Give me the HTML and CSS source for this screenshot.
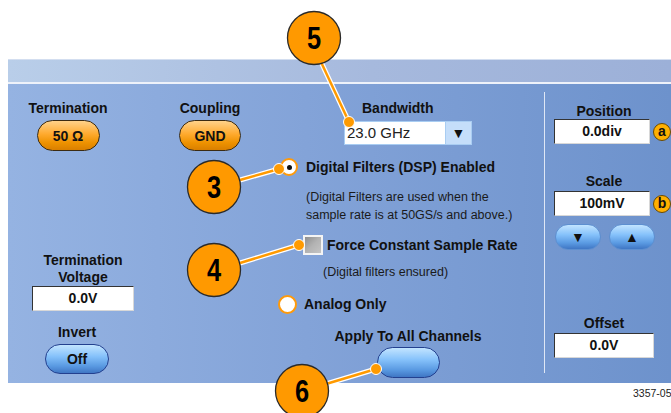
FILE: index.html
```html
<!DOCTYPE html>
<html lang="en">
<head>
    <meta charset="UTF-8">
    <meta name="viewport" content="width=device-width, initial-scale=1.0">
    <title>Channel Setup</title>
    <link rel="stylesheet" href="styles.css">
</head>
<body>
    <div class="page">
        <div class="panel">
            <div class="panel-head"></div>
            <div class="panel-body">

                <!-- left column: termination, voltage, invert -->
                <div class="col col-left">
                    <div class="group g-term">
                        <div class="label">Termination</div>
                        <div class="pill pill-orange">50 Ω</div>
                    </div>
                    <div class="group g-tv">
                        <div class="label label-2">Termination<br>Voltage</div>
                        <div class="field">0.0V</div>
                    </div>
                    <div class="group g-invert">
                        <div class="label">Invert</div>
                        <div class="pill pill-blue">Off</div>
                    </div>
                </div>

                <!-- middle column: coupling, bandwidth, filters -->
                <div class="col col-mid">
                    <div class="top-row">
                        <div class="group g-coupling">
                            <div class="label">Coupling</div>
                            <div class="pill pill-orange">GND</div>
                        </div>
                        <div class="g-bw">
                            <div class="label bw-label">Bandwidth</div>
                            <div class="dropdown">
                                <span class="dd-value">23.0 GHz</span>
                                <span class="dd-arrow">▼</span>
                            </div>
                        </div>
                    </div>

                    <div class="options">
                        <div class="option opt-dsp">
                            <span class="radio checked"></span>
                            <span class="opt-text">Digital Filters (DSP) Enabled</span>
                        </div>
                        <p class="note note-dsp">(Digital Filters are used when the<br>sample rate is at 50GS/s and above.)</p>
                        <div class="option opt-force">
                            <span class="checkbox"></span>
                            <span class="opt-text">Force Constant Sample Rate</span>
                        </div>
                        <p class="note note-force">(Digital filters ensured)</p>
                        <div class="option opt-analog">
                            <span class="radio"></span>
                            <span class="opt-text">Analog Only</span>
                        </div>
                    </div>

                    <div class="group g-apply">
                        <div class="label">Apply To All Channels</div>
                        <div class="pill pill-blue apply-btn"></div>
                    </div>
                </div>

                <!-- right column: position, scale, offset -->
                <div class="col col-right">
                    <div class="label">Position</div>
                    <div class="field-row">
                        <div class="field">0.0div</div>
                        <span class="badge">a</span>
                    </div>
                    <div class="label scale-label">Scale</div>
                    <div class="field-row">
                        <div class="field">100mV</div>
                        <span class="badge">b</span>
                    </div>
                    <div class="arrows">
                        <div class="pill pill-blue arrow-btn">▼</div>
                        <div class="pill pill-blue arrow-btn">▲</div>
                    </div>
                    <div class="label offset-label">Offset</div>
                    <div class="field-row">
                        <div class="field">0.0V</div>
                    </div>
                </div>
            </div>
        </div>
        <div class="fig-id">3357-05</div>

        <!-- numbered callouts drawn over the panel -->
        <svg class="callouts" width="671" height="413" viewBox="0 0 671 413">
            <g class="leader">
                <line x1="321" y1="62" x2="349" y2="122"/>
                <line x1="240" y1="180" x2="279" y2="169"/>
                <line x1="240" y1="263" x2="299" y2="245"/>
                <line x1="326" y1="384" x2="376" y2="369"/>
            </g>
            <g class="leader-in">
                <line x1="321" y1="62" x2="349" y2="122"/>
                <line x1="240" y1="180" x2="279" y2="169"/>
                <line x1="240" y1="263" x2="299" y2="245"/>
                <line x1="326" y1="384" x2="376" y2="369"/>
            </g>
            <g class="dot">
                <circle cx="349" cy="122" r="5.5"/>
                <circle cx="279" cy="169" r="5.5"/>
                <circle cx="299" cy="245" r="5.5"/>
                <circle cx="376" cy="369" r="5.5"/>
            </g>
            <g class="bubble">
                <circle cx="314" cy="38" r="26.5"/>
                <circle cx="214" cy="187" r="26.5"/>
                <circle cx="214" cy="270" r="26.5"/>
                <circle cx="302" cy="391" r="26.5"/>
            </g>
            <g class="num">
                <text transform="translate(314 49) scale(0.82 1)">5</text>
                <text transform="translate(214 198) scale(0.82 1)">3</text>
                <text transform="translate(214 281) scale(0.82 1)">4</text>
                <text transform="translate(302 402) scale(0.82 1)">6</text>
            </g>
        </svg>
    </div>
</body>
</html>
```

FILE: styles.css
```css
body {
    margin: 0;
    font-family: "Liberation Sans", Arial, sans-serif;
    background: #fff;
}
.page {
    position: relative;
    width: 671px;
    height: 413px;
    overflow: hidden;
}
.panel {
    margin: 59px 0 0 8px;
}
.panel-head {
    height: 22px;
    background: linear-gradient(to right, #b9cee9, #a6b9dd 55%, #9cb0d8);
    border-top: 1px solid #d3def0;
    border-bottom: 2px solid #eef2fa;
}
.panel-body {
    display: flex;
    height: 299px;
    background: linear-gradient(to right, #95b3e2, #83a3d8 45%, #6d92cc);
}
.label {
    font-size: 14px;
    font-weight: bold;
    line-height: 16px;
    color: #111;
    text-align: center;
    white-space: nowrap;
}
.group {
    display: flex;
    flex-direction: column;
    align-items: center;
}

/* buttons */
.pill {
    box-sizing: border-box;
    border-radius: 16px;
    font-size: 14px;
    font-weight: bold;
    color: #111;
    display: flex;
    align-items: center;
    justify-content: center;
}
.pill-orange {
    width: 63px;
    height: 31px;
    margin-top: 4px;
    background: linear-gradient(#ffd28a, #ffaa2e 45%, #ee9200 75%, #d97f00);
    border: 1.5px solid #3b2b12;
}
.pill-blue {
    height: 30px;
    background: linear-gradient(#c2e4ff, #86c2fb 40%, #5a9ae2 75%, #3f76c4);
    border: 1.5px solid #23408f;
}

/* left column */
.col-left {
    width: 150px;
    padding-top: 16px;
}
.g-term {
    margin-left: 20px;
    width: 80px;
}
.g-tv {
    margin-left: 24px;
    width: 102px;
    margin-top: 101px;
}
.label-2 {
    line-height: 17px;
}
.g-invert {
    margin-left: 29px;
    width: 80px;
    margin-top: 13px;
}
.g-invert .pill {
    width: 64px;
    margin-top: 4px;
}

/* value fields */
.field {
    box-sizing: border-box;
    width: 102px;
    height: 25px;
    background: #fff;
    border-top: 1.5px solid #333;
    border-left: 1.5px solid #333;
    border-right: 1px solid #d8d8d8;
    border-bottom: 1px solid #d8d8d8;
    font-size: 14px;
    font-weight: bold;
    line-height: 22px;
    text-align: center;
    color: #111;
}

/* middle column */
.col-mid {
    width: 386px;
    padding-top: 16px;
}
.top-row {
    display: flex;
}
.g-coupling {
    margin-left: 21px;
    width: 62px;
}
.g-coupling .pill {
    width: 62px;
}
.g-bw {
    margin-left: 103px;
}
.bw-label {
    text-align: left;
    padding-left: 18px;
}
.dropdown {
    display: flex;
    margin-top: 5px;
    height: 24px;
}
.dd-value {
    box-sizing: border-box;
    width: 102px;
    background: #fff;
    border: 1px solid #a9cdf2;
    font-size: 15px;
    line-height: 22px;
    padding-left: 2px;
    color: #222;
}
.dd-arrow {
    box-sizing: border-box;
    width: 26px;
    background: #c5defa;
    border: 1px solid #a9cdf2;
    border-left: none;
    font-size: 14px;
    line-height: 22px;
    text-align: center;
    color: #111;
}

.options {
    margin-top: 7px;
    padding-left: 122px;
}
.option {
    display: flex;
    align-items: center;
    height: 18px;
}
.opt-text {
    font-size: 14px;
    font-weight: bold;
    color: #111;
    white-space: nowrap;
}
.radio {
    box-sizing: border-box;
    width: 18px;
    height: 18px;
    border-radius: 50%;
    background: #fff;
    border: 2.5px solid #ff9a0a;
    display: flex;
    align-items: center;
    justify-content: center;
}
.radio.checked::after {
    content: "";
    width: 5px;
    height: 5px;
    border-radius: 50%;
    background: #111;
}
.opt-dsp .opt-text {
    margin-left: 8px;
}
.note {
    margin: 0;
    font-size: 12.5px;
    line-height: 18px;
    color: #1a1a1a;
    white-space: nowrap;
}
.note-dsp {
    margin: 12px 0 0 26px;
}
.opt-force {
    margin-top: 11px;
    height: 20px;
}
.checkbox {
    box-sizing: border-box;
    width: 20px;
    height: 20px;
    margin-left: 23px;
    border: 2px solid #f4f4f4;
    background: linear-gradient(135deg, #8e8e8e, #b3b3b3 50%, #c4c4c4);
}
.opt-force .opt-text {
    margin-left: 4px;
}
.note-force {
    margin: 8px 0 0 43px;
}
.opt-analog {
    margin: 14px 0 0 -2px;
}
.opt-analog .radio {
    width: 19px;
    height: 19px;
}
.opt-analog .opt-text {
    margin-left: 7px;
}

.g-apply {
    width: 160px;
    margin: 15px 0 0 170px;
}
.apply-btn {
    width: 63px;
    height: 31px;
    margin-top: 3px;
}

/* right column */
.col-right {
    width: 117px;
    margin: 8px 0 10px;
    padding: 11px 0 0 9px;
    border-left: 1px solid #dfe7f5;
}
.col-right .label {
    width: 100px;
}
.col-right .field {
    width: 100px;
    height: 25px;
}
.field-row {
    display: flex;
    align-items: center;
}
.scale-label {
    margin-top: 29px;
}
.scale-label + .field-row,
.offset-label + .field-row {
    margin-top: 2px;
}
.badge {
    flex: none;
    width: 16px;
    height: 16px;
    margin-left: 3px;
    border-radius: 50%;
    background: #ffb000;
    border: 1px solid #6b4a00;
    font-size: 14px;
    font-weight: bold;
    line-height: 14px;
    text-align: center;
    color: #111;
}
.arrows {
    display: flex;
    gap: 8px;
    margin-top: 8px;
    padding-left: 1px;
}
.arrow-btn {
    width: 46px;
    height: 26px;
    border-radius: 13px;
    border-color: #5d8fd0;
    font-size: 14px;
}
.offset-label {
    margin-top: 65px;
}

.fig-id {
    padding: 4px 0 0 633px;
    font-size: 10.5px;
    color: #222;
    white-space: nowrap;
}

/* callouts */
.callouts {
    position: absolute;
    top: 0;
    left: 0;
}
.leader line {
    stroke: #fff;
    stroke-width: 5;
}
.leader-in line {
    stroke: #ff9a00;
    stroke-width: 2.5;
}
.dot circle {
    fill: #ff9a00;
    stroke: #fff;
    stroke-width: 1;
}
.bubble circle {
    fill: #ff9900;
    stroke: #2a2a2a;
    stroke-width: 1.3;
}
.num text {
    font-family: "Liberation Sans", Arial, sans-serif;
    font-size: 31px;
    font-weight: bold;
    text-anchor: middle;
    fill: #000;
}
```
